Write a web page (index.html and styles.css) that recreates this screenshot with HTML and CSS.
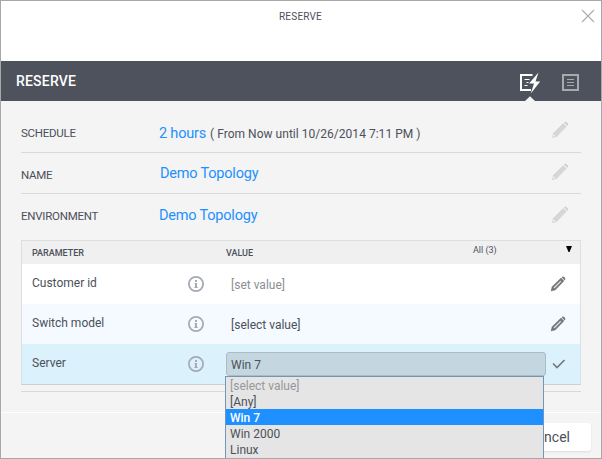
FILE: index.html
```html
<!DOCTYPE html>
<html lang="en">
<head>
<meta charset="utf-8">
<title>Reserve</title>
<link rel="stylesheet" href="styles.css">
</head>
<body>
<svg class="defs" width="0" height="0">
  <symbol id="pencil-flat" viewBox="0 0 18 18">
    <path d="M1 17l1.2-4.8L12.2 2.2l3.4 3.4L5.7 15.7z" fill="#d4d4d4"/>
    <path d="M13 1.5l.6-.6q.8-.6 1.6 0l1.7 1.7q.7.8 0 1.6l-.6.6z" fill="#cecece"/>
    <path d="M2.2 15.7l.7-2.4 1.7 1.8z" fill="#f4f4f4"/>
    <path d="M5 12.600l8-8M6.200 13.700l7.800-7.800" stroke="#e0e0e0" stroke-width=".5"/>
  </symbol>
  <symbol id="pencil" viewBox="0 0 16 16">
    <path d="M.8 15.200l1-4.400 9.200-9 3.200 3.200-9 9.200z" fill="#73777b"/>
    <path d="M11.600 1.200q1.300-1.200 2.500-.2l.8.800q1 1.200-.2 2.600z" fill="#73777b"/>
    <path d="M4 12l6.900-6.900" stroke="#dfe3e5" stroke-width="1.200"/>
  </symbol>
  <symbol id="info" viewBox="0 0 16 16">
    <circle cx="8" cy="8" r="7.1" fill="none" stroke="#a7aab4" stroke-width="1.800"/>
    <path d="M7 4h2v2H7zM6.500 7H9v4h.8v1H6.300v-1H7V8h-.5z" fill="#a7aab4"/>
  </symbol>
</svg>
<div class="dialog">
  <header class="titlebar">
    <span class="title">RESERVE</span>
    <svg class="close" width="14" height="14" viewBox="0 0 14 14"><path d="M1 1l12 12M13 1L1 13" stroke="#a9adb5" stroke-width="1.2"/></svg>
  </header>
  <div class="toolbar">
    <h1>RESERVE</h1>
    <svg class="tool quick" width="22" height="30" viewBox="0 0 22 30">
      <path d="M13.500 4H2v15h10" fill="none" stroke="#fff" stroke-width="2"/>
      <path d="M5.500 8.500h5M7.500 11.500h2M5.500 14.500h3" stroke="#fff"/>
      <path d="M19.500 1.500L10 12.500h5L11.800 22.500l9.400-12h-4.700z" fill="#fff"/>
      <path d="M6 30L11 25.300l5 4.700z" fill="#f4f4f4"/>
    </svg>
    <svg class="tool list" width="17" height="17" viewBox="0 0 17 17"><path d="M1 1h15v15H1z" fill="none" stroke="#a7a9ae" stroke-width="2"/><path d="M5 5.500h7M5 8.500h7M5 11.500h7" stroke="#a7a9ae"/></svg>
  </div>
  <main>
    <section class="field schedule">
      <span class="label">SCHEDULE</span>
      <span class="value"><a>2 hours</a><small>( From Now until 10/26/2014 7:11 PM )</small></span>
      <svg class="edit" width="18" height="18"><use href="#pencil-flat"/></svg>
    </section>
    <section class="field name">
      <span class="label">NAME</span>
      <span class="value"><a>Demo Topology</a></span>
      <svg class="edit" width="18" height="18"><use href="#pencil-flat"/></svg>
    </section>
    <section class="field environment">
      <span class="label">ENVIRONMENT</span>
      <span class="value"><a>Demo Topology</a></span>
      <svg class="edit" width="18" height="18"><use href="#pencil-flat"/></svg>
    </section>
    <div class="table">
      <div class="row head">
        <span class="param">PARAMETER</span>
        <span class="val">VALUE</span>
        <span class="filter">All (3)</span>
        <svg class="caret" width="6" height="6" viewBox="0 0 6 6"><path d="M0 0h6L3.500 6h-1z"/></svg>
      </div>
      <div class="row">
        <span class="param">Customer id</span>
        <svg class="info" width="16" height="16"><use href="#info"/></svg>
        <span class="val unset">[set value]</span>
        <svg class="pen" width="16" height="16"><use href="#pencil"/></svg>
      </div>
      <div class="row alt">
        <span class="param">Switch model</span>
        <svg class="info" width="16" height="16"><use href="#info"/></svg>
        <span class="val">[select value]</span>
        <svg class="pen" width="16" height="16"><use href="#pencil"/></svg>
      </div>
      <div class="row active">
        <span class="param">Server</span>
        <svg class="info" width="16" height="16"><use href="#info"/></svg>
        <div class="select"><span>Win 7</span>
          <ul class="menu">
            <li class="muted">[select value]</li>
            <li>[Any]</li>
            <li class="selected">Win 7</li>
            <li>Win 2000</li>
            <li>Linux</li>
          </ul>
        </div>
        <svg class="check" width="14" height="10" viewBox="0 0 14 10"><path d="M1 4.500l4 4L12.500 1" fill="none" stroke="#747b7e" stroke-width="1.700"/></svg>
      </div>
    </div>
  </main>
  <footer><button>Cancel</button></footer>
</div>
</body>
</html>
```
FILE: styles.css
```css
* { box-sizing: border-box; }
body { margin: 0; overflow: hidden; font-family: Roboto, "Liberation Sans", sans-serif; color: #4c505a; }
.defs { display: block; position: absolute; }
.dialog { width: 602px; height: 459px; border: 1px solid #a8a8a8; background: #f4f4f4; display: flex; flex-direction: column; overflow: hidden; }
.titlebar { height: 60px; flex: none; background: #fff; display: flex; justify-content: flex-end; padding: 8px 6px 0 0; }
.title { flex: 1; padding-left: 278px; font-size: 10px; line-height: 16px; letter-spacing: .2px; }
.close { flex: none; }
.toolbar { height: 40px; flex: none; background: #4e525d; display: flex; align-items: flex-start; padding: 0 22px 0 15px; }
h1 { flex: 1; margin: 0; color: #fff; font-size: 14px; line-height: 40px; font-weight: 500; letter-spacing: .2px; }
.quick { margin: 10px 21px 0 0; }
.list { margin-top: 13px; }
main { flex: none; height: 312px; padding: 0 20px; border-bottom: 1px solid #fff; }
main::after { content: ""; display: block; height: 1px; margin-top: 6px; background: #d9d9d9; }
.field { display: flex; border-bottom: 1px solid #d9d9d9; height: 41px; padding-right: 12px; }
.label { width: 138px; font-size: 11.5px; line-height: 16px; padding-top: 14px; letter-spacing: -.25px; }
.value { flex: 1; line-height: 20px; padding-top: 10px; white-space: nowrap; }
.value a { color: #1e90ff; font-size: 14.5px; letter-spacing: -.2px; }
.value small { font-size: 12px; margin-left: 4px; letter-spacing: .03px; }
.edit { margin-top: 10px; }
.schedule { height: 52px; }
.schedule .label { padding-top: 24px; }
.schedule .value { padding-top: 22px; }
.schedule .edit { margin-top: 20px; }
.name .value { padding-left: 1px; }
.environment { border: 0; height: 46px; }
.environment .value { padding-top: 11px; }
.environment .edit { margin-top: 12px; }
.table { height: 145px; border: 1px solid #dcdfe2; border-bottom-color: #cbd0d4; }
.row { display: flex; height: 40px; padding-left: 10px; background: #fff; font-size: 12px; line-height: 16px; }
.head { height: 23px; background: #f0f0f0; font-size: 9px; font-weight: 500; padding-top: 3px; }
.param { width: 156px; padding-top: 11px; }
.head .param { width: 194px; padding-top: 1px; }
.head .val { width: 247px; padding: 1px 0 0; }
.filter { width: 93px; font-weight: 400; line-height: 13px; }
.caret { margin-top: 2px; }
.info { margin: 12px 0 0; }
.val { width: 346px; padding: 13px 0 0 27px; }
.unset { color: #8c8e92; }
.pen { margin-top: 12px; }
.alt { background: #f4faff; }
.active { background: #dbf1fc; }
.select { position: relative; width: 320px; height: 24px; margin: 8px 6px 0 22px; padding: 4px; border: 1px solid #a9bdc6; border-radius: 3px; background: #c4d7e0; }
.menu { position: absolute; left: -2px; top: 23px; width: 319px; height: 84px; margin: 0; padding: 1px 1px 0 0; list-style: none; border: 1px solid #7496b6; background: #e5e5e5; }
.menu li { height: 16px; line-height: 18px; padding-left: 4px; }
.menu .muted { color: #96989b; line-height: 17px; }
.menu .selected { background: #1e90ff; color: #fff; font-weight: 500; margin-right: -1px; }
.menu li:nth-child(2) { height: 15px; line-height: 17px; }
.check { margin-top: 15px; }
footer { display: flex; justify-content: flex-end; padding: 10px 10px 0; }
button { width: 80px; height: 28px; padding: 0 21px 0 0; border: 0; border-radius: 3px; background: #fff; box-shadow: 0 1px 2px #dedede; color: #4c505a; font: 14px/28px Roboto, sans-serif; text-align: right; }
```
